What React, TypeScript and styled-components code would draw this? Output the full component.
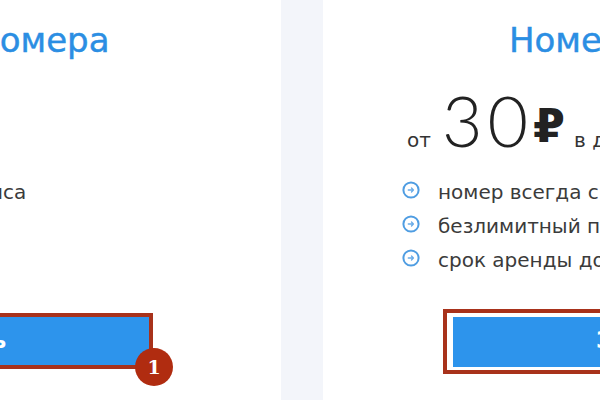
import React from "react";
import styled, { createGlobalStyle } from "styled-components";

const CARD_W = 678;
const VISIBLE_LEFT_EDGE = 281;

const GlobalStyle = createGlobalStyle`
  html, body {
    margin: 0;
    padding: 0;
    background: #f3f5fa;
    overflow: hidden;
  }
  body {
    font-family: "DejaVu Sans", "Noto Sans", sans-serif;
  }
`;

const Page = styled.main`
  display: flex;
  gap: 42px;
  width: max-content;
  margin-left: ${VISIBLE_LEFT_EDGE - CARD_W}px;
`;

const Card = styled.section`
  flex: none;
  box-sizing: border-box;
  width: ${CARD_W}px;
  height: 420px;
  padding-top: 20px;
  background: #ffffff;
  display: flex;
  flex-direction: column;
  align-items: center;
`;

const Title = styled.h2`
  margin: 0;
  font-size: 34px;
  line-height: 40px;
  font-weight: 400;
  color: #2b8ee3;
  -webkit-text-stroke: 0.45px #2b8ee3;
  white-space: nowrap;
`;

const Body = styled.div`
  width: 518px;
  display: flex;
  flex-direction: column;
`;

const PriceRow = styled.div`
  margin-top: 25px;
  padding-left: 4px;
  height: 68px;
  line-height: 1;
  font-size: 20px;
  color: #333333;
  white-space: nowrap;
`;

const PriceWord = styled.span`
  font-size: 20px;
  line-height: 1;
  color: #333333;
`;

const PriceValue = styled.span`
  font-family: "Lato", "Open Sans", sans-serif;
  font-weight: 300;
  font-size: 70px;
  line-height: 1;
  letter-spacing: 5px;
  color: #222222;
  margin-left: 11px;
`;

const Currency = styled.span`
  font-family: "DejaVu Sans", "Noto Sans", sans-serif;
  font-weight: 700;
  font-size: 46px;
  line-height: 1;
  color: #222222;
  vertical-align: 5px;
  margin: 0 9px 0 0;
`;

const Features = styled.ul`
  list-style: none;
  margin: 22px 0 0;
  padding: 0;
`;

const Feature = styled.li`
  display: flex;
  align-items: center;
  height: 34px;
  font-size: 20px;
  color: #3b3b3b;
  white-space: nowrap;
`;

const BulletIcon = styled.svg`
  flex: none;
  width: 18px;
  height: 18px;
  margin-left: -1px;
  margin-right: 18px;
  margin-bottom: 5px;
`;

const ButtonArea = styled.div`
  position: relative;
  margin-top: 40px;
`;

const OrderButton = styled.button`
  display: block;
  width: 418px;
  height: 50px;
  padding: 0 0 4px;
  border: none;
  background: #2d94ec;
  color: #ffffff;
  font-family: "DejaVu Sans", "Noto Sans", sans-serif;
  font-weight: 700;
  font-size: 23px;
  letter-spacing: 1.5px;
  cursor: pointer;
`;

const Highlight = styled.span<{ $t: number; $r: number; $b: number; $l: number }>`
  position: absolute;
  top: ${(p) => -p.$t}px;
  right: ${(p) => -p.$r}px;
  bottom: ${(p) => -p.$b}px;
  left: ${(p) => -p.$l}px;
  border: 4px solid #a8321b;
  pointer-events: none;
`;

const Badge = styled.span`
  position: absolute;
  right: -22px;
  bottom: -19px;
  width: 38px;
  height: 38px;
  border-radius: 50%;
  background: #b02c10;
  color: #ffffff;
  font-family: "DejaVu Serif", "Liberation Serif", serif;
  font-weight: 700;
  font-size: 19px;
  display: flex;
  align-items: center;
  justify-content: center;
`;

const Bullet = () => (
  <BulletIcon viewBox="0 0 18 18" aria-hidden="true">
    <circle cx="9" cy="9" r="7.6" fill="none" stroke="#4f9de2" strokeWidth="2" />
    <path
      d="M6.3 9h5M9.5 7.1 11.4 9l-1.9 1.9"
      fill="none"
      stroke="#6aace8"
      strokeWidth="1.4"
      strokeLinecap="round"
      strokeLinejoin="round"
    />
  </BulletIcon>
);

type Plan = {
  title: string;
  price: string;
  unit: string;
  features: string[];
  highlight: { t: number; r: number; b: number; l: number };
  badge?: string;
};

const plans: Plan[] = [
  {
    title: "Активация номера",
    price: "2",
    unit: "за номер",
    features: ["выгодно для любого сервиса", "мгновенная выдача", "низкая стоимость"],
    highlight: { t: 4, r: 2, b: 2, l: 4 },
    badge: "1",
  },
  {
    title: "Номера в аренду",
    price: "30",
    unit: "в день",
    features: ["номер всегда с вами", "безлимитный прием SMS", "срок аренды до 30 дней"],
    highlight: { t: 8, r: 10, b: 7, l: 10 },
  },
];

export default function App() {
  return (
    <>
      <GlobalStyle />
      <Page>
        {plans.map((plan) => (
          <Card key={plan.title}>
            <Title>{plan.title}</Title>
            <Body>
              <PriceRow>
                <PriceWord>от</PriceWord>
                <PriceValue>{plan.price}</PriceValue>
                <Currency>₽</Currency>
                <PriceWord>{plan.unit}</PriceWord>
              </PriceRow>
              <Features>
                {plan.features.map((f) => (
                  <Feature key={f}>
                    <Bullet />
                    {f}
                  </Feature>
                ))}
              </Features>
            </Body>
            <ButtonArea>
              <OrderButton type="button">Заказать</OrderButton>
              <Highlight
                $t={plan.highlight.t}
                $r={plan.highlight.r}
                $b={plan.highlight.b}
                $l={plan.highlight.l}
              />
              {plan.badge && <Badge>{plan.badge}</Badge>}
            </ButtonArea>
          </Card>
        ))}
      </Page>
    </>
  );
}
